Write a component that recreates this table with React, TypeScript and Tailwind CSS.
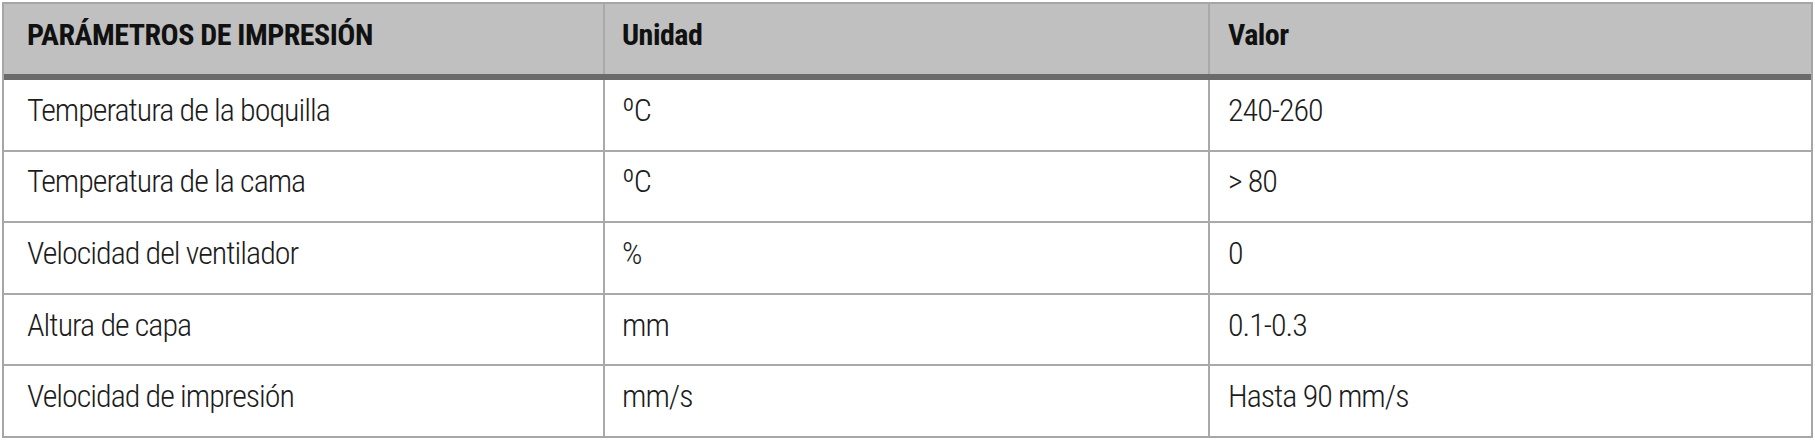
const rows = [
  ['Temperatura de la boquilla', 'ºC', '240-260'],
  ['Temperatura de la cama', 'ºC', '> 80'],
  ['Velocidad del ventilador', '%', '0'],
  ['Altura de capa', 'mm', '0.1-0.3'],
  ['Velocidad de impresión', 'mm/s', 'Hasta 90 mm/s'],
]

const font = "font-['Roboto_Condensed','DejaVu_Sans_Condensed',sans-serif]"

export default function App() {
  return (
    <div className={`mx-[2px] mt-[2px] flex h-[436px] flex-col border-2 border-[#a6a6a6] bg-white ${font}`}>
      {/* header */}
      <div className="grid h-[70px] grid-cols-[599px_605px_1fr] bg-[#c0c0c0] text-[30px] font-bold tracking-[-0.5px] text-[#111]">
        <div className="flex items-center pb-[9px] pl-[23px]">PARÁMETROS DE IMPRESIÓN</div>
        <div className="flex items-center border-l-2 border-[#a9a9a9] pb-[9px] pl-[17px]">Unidad</div>
        <div className="flex items-center border-l-2 border-[#a9a9a9] pb-[9px] pl-[18px]">Valor</div>
      </div>
      <div className="h-[6px] bg-[#6b6b6b]" />

      {rows.map((r, i) => (
        <div
          key={r[0]}
          className={
            'grid flex-1 grid-cols-[599px_605px_1fr] text-[32px] font-light tracking-[-1px] text-[#1c1c1c] ' +
            (i > 0 ? 'border-t-2 border-[#a9a9a9]' : '')
          }
        >
          <div className="flex items-center pb-[10px] pl-[23px]">{r[0]}</div>
          <div className="flex items-center border-l-2 border-[#a9a9a9] pb-[10px] pl-[17px]">{r[1]}</div>
          <div className="flex items-center border-l-2 border-[#a9a9a9] pb-[10px] pl-[18px]">{r[2]}</div>
        </div>
      ))}
    </div>
  )
}
